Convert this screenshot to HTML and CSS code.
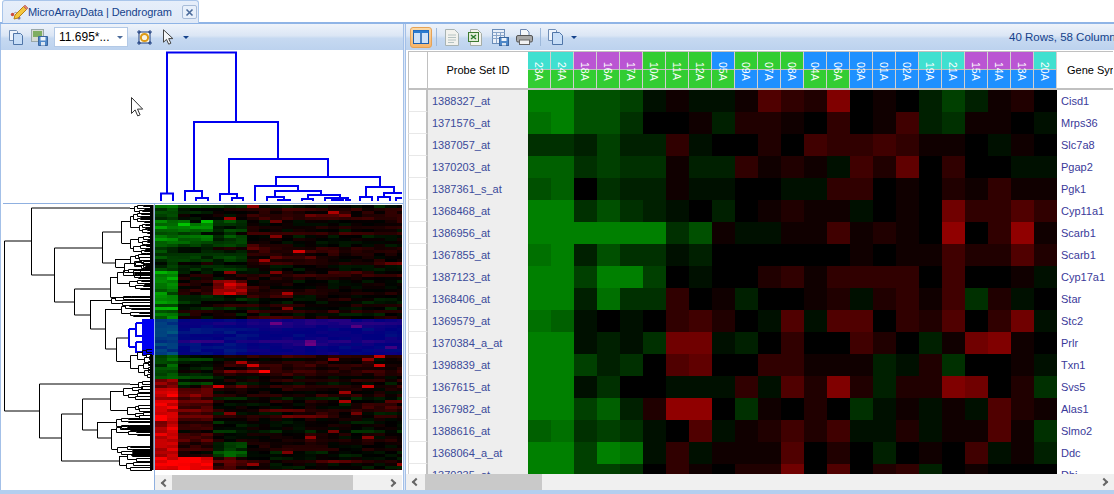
FILE: index.html
```html
<!DOCTYPE html>
<html lang="en">
<head>
<meta charset="utf-8">
<title>MicroArrayData | Dendrogram</title>
<link rel="stylesheet" href="styles.css">
</head>
<body>
<div class="app">
  <div class="tabstrip">
    <div class="tab">
      <svg class="tab-icon" width="18" height="16" viewBox="0 0 18 16"><path d="M2 10.500 6 8l3 5" fill="none" stroke="#a89c9c" stroke-width="1"/><circle cx="2.500" cy="10.500" r="1.700" fill="#cf4a3c"/><circle cx="9" cy="14" r="1.500" fill="#7d7398"/><path d="M5 11 13.500 2.500l3 3L8 14l-4 1z" fill="#f4c63e" stroke="#b87f12" stroke-width="1"/><path d="M13.500 2.500l1.500-1.500 3 3-1.500 1.500z" fill="#e0806f" stroke="#b0604f" stroke-width=".6"/></svg>
      <span class="tab-label">MicroArrayData | Dendrogram</span>
      <span class="tab-close"><svg width="9" height="9" viewBox="0 0 9 9"><path d="M1.500 1.500l6 6M7.500 1.500l-6 6" stroke="#4a6a9a" stroke-width="1.600"/></svg></span>
    </div>
  </div>
  <div class="workspace">
    <section class="panel panel-left">
      <div class="toolbar">
        <svg class="ico ico-copy" width="16" height="16" viewBox="0 0 16 16"><path d="M1.500 1.500h7l1 1v9h-8z" fill="#eef4fc" stroke="#6f8db5"/><path d="M5.500 4.500h7l2 2v9h-9z" fill="#c8def7" stroke="#4f75a8"/></svg>
        <svg class="ico ico-saveimg" width="17" height="17" viewBox="0 0 17 17"><rect x=".5" y=".5" width="12" height="12" fill="#d6dcd4" stroke="#9aa8a8"/><rect x="2" y="2" width="9" height="6" fill="#7fae62"/><path d="M7.500 7.500h9v9h-9z" fill="#4f88c8" stroke="#3a669f"/><rect x="9.500" y="8" width="5" height="3.500" fill="#eef4fb"/><rect x="10" y="13" width="4" height="3.500" fill="#dbe6f2"/></svg>
        <div class="combo"><span class="combo-text">11.695*...</span><span class="caret caret-combo"></span></div>
        <svg class="ico ico-fit" width="15" height="15" viewBox="0 0 15 15"><path d="M2 2h11v11H2z" fill="#f7f3e3" stroke="#1f3f80"/><circle cx="7.500" cy="7.500" r="3.600" fill="none" stroke="#dd9a16" stroke-width="2"/><path d="M0 2h4M2 0v4M11 2h4M13 0v4M0 13h4M2 11v4M11 13h4M13 11v4" stroke="#1f3f80"/></svg>
        <svg class="ico ico-arrow" width="11" height="16" viewBox="0 0 11 16"><path d="M.5.800v12.400l3-2.800 2.200 4.800 2.200-1-2.200-4.600h4.200z" fill="#f4f6f8" stroke="#444"/></svg>
        <span class="caret caret-tool"></span>
      </div>
      <div class="plot">
        <div class="plot-top">
          <svg class="dendro-top" width="248" height="153" viewBox="155 50 248 153"><path fill="none" stroke="#0000f0" stroke-width="2" d="M167 193V52.500H236V122M194 191V122H278V159M229 194V159H328V177M276 186V177H380V187M255 201V186H298V191M275 197V191H321V195M161 201V193.500H173V201M185 201V191H202V198M196 201V198H208V201M220 201V194H237V198M232 201V198H243V201M267 201V197H284V200M278 201V200H290V201M308 199V195H340V198M302 201V199H313V201M325 201V198H348V200M332 201V200H343V201M360 201V197H372V201M366 197V187H394V193M384 197V193H402M378 201V197H390V201M396 201V198H402M350 201V200H345"/></svg>
        </div>
        <div class="plot-bottom">
          <svg id="dendro-left" class="dendro-left" width="153" height="285" viewBox="1 205 153 285"><path fill="none" stroke="#000" d="M4.500 241V411M4.500 241H31.500M4.500 411H39.500M31.500 208V275M31.500 208H130M31.500 275H54.500M54.500 248V302H74.500M54.500 248H102.500M102.500 232V263M102.500 232H121.500M102.500 263H115.500M121.500 221V243M115.500 259V267M74.500 289V315M74.500 289H110.500M74.500 315H90.500M110.500 277V297M90.500 300V329M90.500 329H105.500M105.500 309V349M105.500 349H116.500M116.500 338V361M116.500 338H129M39.500 384V438M39.500 384H130M39.500 438H61.500M61.500 414V461M61.500 414H82.500M61.500 461H119.500M82.500 399V430M82.500 399H110.500M82.500 430H97.500M110.500 391V410M97.500 422V438M97.500 438H111.500M111.500 429V449M119.500 456V465"/><rect x="150" y="205" width="3.500" height="265"/><rect x="142" y="319" width="12" height="36" fill="#0000f0"/><path fill="none" stroke="#0000f0" stroke-width="2" d="M129 329V347M129 329H136M129 347H136M136 323V336H142M136 323H142M136 342V352H142M136 342H142"/></svg>
          <div class="heat-col">
            <div class="heat-wrap">
              <canvas id="heat" width="247" height="265"></canvas>
              <div class="heat-select"></div>
            </div>
            <div class="scrollbar scrollbar-left">
              <span class="chev chev-l"></span><span class="thumb thumb-left"></span><span class="chev chev-r"></span>
            </div>
          </div>
        </div>
        <svg class="mouse" width="13" height="20" viewBox="0 0 13 20"><path d="M.5.500v16l3.600-3.600 2.600 6 2.400-1-2.600-5.800h5.200z" fill="#fff" stroke="#333"/></svg>
      </div>
    </section>
    <section class="panel panel-right">
      <div class="toolbar">
        <span class="tool-on"><svg width="16" height="14" viewBox="0 0 16 14"><rect x=".5" y=".5" width="15" height="13" fill="#cfe2f8" stroke="#1d5fae"/><rect x=".5" y=".5" width="15" height="2.500" fill="#2a7bd0"/><path d="M8 3v10" stroke="#1d5fae" stroke-width="1.500"/></svg></span>
        <span class="sep sep-a"></span>
        <svg class="ico ico-doc" width="14" height="17" viewBox="0 0 14 17"><path d="M.5.500h9l4 4v12H.5z" fill="#f2f2ee" stroke="#a8b3b3"/><path d="M3 6h8M3 8.500h8M3 11h8M3 13.500h6" stroke="#b4c2c2"/></svg>
        <svg class="ico ico-xls" width="14" height="17" viewBox="0 0 14 17"><path d="M2.500.500h7l4 4v12h-11z" fill="#f4f4ee" stroke="#a5aca5"/><rect x=".5" y="3.500" width="10" height="9" fill="#e2ecd8" stroke="#3d7a30"/><path d="M3 6l5 4M8 6l-5 4" stroke="#2c7a2c" stroke-width="1.400"/></svg>
        <svg class="ico ico-tbl" width="17" height="17" viewBox="0 0 17 17"><rect x=".5" y=".5" width="12" height="14" fill="#e9eff8" stroke="#6b8db8"/><path d="M.5 3.500h12M.5 6.500h12M.5 9.500h12M4.500 3v11M8.500 3v11" stroke="#8aa5c9"/><rect x="7.500" y="8.500" width="9" height="8" fill="#4f88c8" stroke="#3a669f"/><rect x="9.500" y="9" width="5" height="3" fill="#eef4fb"/><rect x="10" y="14" width="4" height="2.500" fill="#dbe6f2"/></svg>
        <svg class="ico ico-print" width="17" height="16" viewBox="0 0 17 16"><path d="M4.500.500h6l2.500 2.500v4H4.500z" fill="#f5f7fb" stroke="#6d86ae"/><rect x=".5" y="6.500" width="16" height="6.500" rx="1.500" fill="#a8a8a8" stroke="#555"/><rect x="3.500" y="11" width="10" height="4.500" fill="#f2f2f2" stroke="#666"/></svg>
        <span class="sep sep-b"></span>
        <svg class="ico ico-copy2" width="16" height="16" viewBox="0 0 16 16"><path d="M.5.500h7l1 1v10h-8z" fill="#eef4fc" stroke="#6f8db5"/><path d="M4.500 3.500h7l3 3v9h-10z" fill="#c8def7" stroke="#4f75a8"/></svg>
        <span class="caret caret-tool2"></span>
        <span class="status">40 Rows, 58 Columns</span>
      </div>
      <div class="table-clip">
        <div id="table" class="table"></div>
      </div>
      <div class="scrollbar scrollbar-right">
        <span class="chev chev-l"></span><span class="thumb thumb-right"></span><span class="chev chev-r"></span>
      </div>
    </section>
  </div>
</div>
<script src="app.js"></script>
</body>
</html>
```

FILE: styles.css
```css
* { box-sizing: border-box; }
html, body { margin: 0; padding: 0; }
body { width: 1114px; height: 494px; overflow: hidden; background: #fff; font-family: "Liberation Sans", Arial, sans-serif; font-size: 11px; }
.app { width: 1114px; height: 494px; display: flex; flex-direction: column; }

.tabstrip { height: 22px; padding-left: 2px; background: #fff; flex: none; }
.tab { width: 197px; height: 23px; display: flex; align-items: center; padding-left: 7px; border: 1px solid #a9c5ea; border-bottom: 0; border-radius: 3px 3px 0 0; background: linear-gradient(#e6eefa, #dfe9f7); position: relative; z-index: 1; }
.tab-label { color: #15428b; font-size: 11px; letter-spacing: -.1px; white-space: nowrap; flex: 1; overflow: hidden; }
.tab-close { width: 15px; height: 14px; margin-right: 1px; display: flex; align-items: center; justify-content: center; border: 1px solid #a8bcd8; border-radius: 2px; background: #e8f0fb; }

.workspace { flex: 1; min-height: 0; display: flex; gap: 1px; background: #dfe8f6; border-top: 2px solid #8fb4e6; border-bottom: 4px solid #b4cfef; }
.panel { display: flex; flex-direction: column; min-width: 0; background: #fff; }
.panel-left { width: 404px; border-left: 1px solid #a3c0e8; border-right: 1px solid #a3c0e8; }
.panel-right { flex: 1; border-left: 1px solid #a3c0e8; }

.toolbar { height: 26px; flex: none; display: flex; align-items: center; overflow: hidden; background: linear-gradient(#eef3fa 0, #dbe6f5 45%, #c6d9f1 55%, #bcd2ee 100%); }
.ico { flex: none; display: block; }
.ico-copy { margin-left: 7px; }
.ico-saveimg { margin-left: 7px; }
.combo { width: 74px; height: 20px; margin-left: 6px; display: flex; align-items: center; padding-left: 4px; background: #fff; border: 1px solid #b3c9e6; flex: none; }
.combo-text { font-size: 12px; color: #000; flex: 1; }
.caret { width: 0; height: 0; display: block; border-left: 3px solid transparent; border-right: 3px solid transparent; border-top: 3px solid #15428b; flex: none; }
.caret-combo { margin-right: 4px; border-top-color: #4a6a9a; }
.ico-fit { margin-left: 9px; }
.ico-arrow { margin-left: 11px; }
.caret-tool { margin-left: 9px; }

.tool-on { width: 22px; height: 21px; margin-left: 4px; display: flex; align-items: center; justify-content: center; flex: none; border: 1px solid #e5a257; border-radius: 3px; background: linear-gradient(#fbd9a5, #f8b56a); }
.sep { width: 1px; height: 18px; background: #9db8da; flex: none; }
.sep-a { margin-left: 4px; }
.ico-doc { margin-left: 8px; }
.ico-xls { margin-left: 9px; }
.ico-tbl { margin-left: 10px; }
.ico-print { margin-left: 7px; }
.sep-b { margin-left: 7px; }
.ico-copy2 { margin-left: 7px; }
.caret-tool2 { margin-left: 7px; }
.status { margin-left: 432px; color: #15428b; font-size: 11.500px; white-space: nowrap; }

.plot { flex: 1; min-height: 0; display: flex; flex-direction: column; position: relative; }
.plot-top { height: 153px; padding-left: 154px; flex: none; }
.dendro-top, .dendro-left { display: block; }
.plot-bottom { flex: 1; min-height: 0; display: flex; border-top: 1px solid #8fb0e0; padding-top: 1px; margin-left: 2px; }
.dendro-left { margin-left: -2px; flex: none; }
.heat-col { width: 248px; margin-top: -1px; padding-top: 1px; border-left: 1px solid #8fb0e0; display: flex; flex-direction: column; flex: none; }
.heat-wrap { position: relative; height: 265px; }
#heat { display: block; }
.heat-select { position: absolute; left: 0; right: 0; top: 114px; height: 36px; background: rgba(0, 0, 255, .5); }
.mouse { position: absolute; left: 130px; top: 47px; }

.scrollbar { height: 16px; display: flex; align-items: center; background: #f0f0f0; flex: none; }
.scrollbar-left { margin-top: 5px; height: 15px; }
.thumb { display: block; height: 100%; background: #c9c9c9; }
.thumb-left { width: 181px; margin-left: 4px; }
.thumb-right { width: 117px; margin-left: 6px; }
.chev { width: 6px; height: 6px; display: block; border-left: 2px solid #666; border-bottom: 2px solid #666; flex: none; }
.chev-l { margin-left: 7px; transform: rotate(45deg); }
.chev-r { margin-left: auto; margin-right: 7px; transform: rotate(225deg); }

.table-clip { flex: 1; min-height: 0; overflow: hidden; padding: 1px 0 0 2px; }
.table { display: grid; grid-template-columns: 20px 100px repeat(23, 23px) 56px; grid-auto-rows: 22px; grid-template-rows: 39px; }
.th { background: #fff; border-top: 1px solid #c0c0c0; border-bottom: 2px solid #c0c0c0; color: #000; display: flex; align-items: center; justify-content: center; white-space: nowrap; overflow: hidden; }
.th-num { border-left: 1px solid #c0c0c0; border-right: 1px solid #c0c0c0; }
.th-gene { justify-content: flex-start; padding-left: 10px; }
.sample { position: relative; display: flex; flex-direction: column; border-right: 1px solid #d0d0d0; border-top: 1px solid #c0c0c0; border-bottom: 2px solid #c0c0c0; }
.sample-top { height: 18px; border-bottom: 1px solid #c0c0c0; flex: none; }
.sample-bot { flex: 1; }
.sample-label { position: absolute; left: 0; right: 0; top: 8px; color: #fff; font-size: 10.500px; line-height: 22px; height: 22px; writing-mode: vertical-rl; text-align: center; display: flex; justify-content: center; }
.num { background: #fff; border-left: 1px solid #d0d0d0; border-right: 2px solid #c0c0c0; border-bottom: 1px solid #e8e8e8; }
.probe { background: #eeeeee; color: #3a4a9a; display: flex; align-items: center; padding-left: 4px; white-space: nowrap; }
.gene { background: #fff; color: #3a3a9a; display: flex; align-items: center; padding-left: 4px; white-space: nowrap; overflow: hidden; }
```

FILE: app.js
```js
(function () {
  var seed = 11;
  function rnd() { seed = (seed * 16807) % 2147483647; return (seed - 1) / 2147483646; }

  /* Right-hand table */
  var T = '#40e0d0', O = '#ba55d3', G = '#32cd32', B = '#1e90ff';
  var samples = [
    ['23A', T, G], ['24A', T, G], ['18A', O, G], ['16A', O, G], ['17A', O, G], ['10A', G, G],
    ['11A', G, G], ['12A', G, G], ['05A', B, G], ['09A', G, B], ['07A', G, B], ['08A', G, B],
    ['04A', B, G], ['06A', B, G], ['03A', B, B], ['01A', B, B], ['02A', B, B], ['19A', T, B],
    ['21A', T, B], ['15A', O, B], ['14A', O, B], ['13A', O, B], ['20A', T, B]
  ];
  var rows = [
    ['1388327_at', 'Cisd1', 'hheeda1aa15328010bdb120'],
    ['1371576_at', 'Mrps36', 'gheec001b22103014bc110a'],
    ['1387057_at', 'Slc7a8', 'ccbdbb3a002043343110a10'],
    ['1370203_at', 'Pgap2', 'ffcdcc1bb3121a4260300aa'],
    ['1387361_s_at', 'Pgk1', 'ef0cbb1aa00aa3301021311'],
    ['1368468_at', 'Cyp11a1', 'hhcecba0b01211a01073353'],
    ['1386956_at', 'Scarb1', 'hhhhhhce1aa114121090391'],
    ['1367855_at', 'Scarb1', 'ghbeccab000000101142252'],
    ['1387123_at', 'Cyp17a1', 'hhdhhd0a00231333304001a'],
    ['1368406_at', 'Star', 'hhbgcc301b0012a2314c2a0'],
    ['1369579_at', 'Stc2', 'gfa0a03420a5a550325037a'],
    ['1370384_a_at', 'Prlr', 'hhabac77ab0300420b17810'],
    ['1398839_at', 'Txn1', 'hhdbc0560033111ba2c001a'],
    ['1367615_at', 'Svs5', 'hhac00aaa3a5282b228702c'],
    ['1367982_at', 'Alas1', 'hhdfb2990c1020ca1a1a521'],
    ['1388616_at', 'Slmo2', 'fgcdca05a12424aa2a1151c'],
    ['1368064_a_at', 'Ddc', 'hhdhga3a1115020b0104a1b'],
    ['1370235_at', 'Dbi', 'hhddc031022705023b01000']
  ];
  function color(ch) {
    var c = ch.charCodeAt(0), v;
    if (c >= 97) { v = (c - 96) * 16; return 'rgb(0,' + v + ',0)'; }
    v = (c - 48) * 16;
    return 'rgb(' + v + ',0,0)';
  }
  function el(cls, text) {
    var d = document.createElement('div');
    d.className = cls;
    if (text) d.textContent = text;
    return d;
  }
  var table = document.getElementById('table');
  table.appendChild(el('th th-num'));
  table.appendChild(el('th', 'Probe Set ID'));
  samples.forEach(function (s) {
    var h = el('sample');
    var a = el('sample-top'); a.style.background = s[1];
    var b = el('sample-bot'); b.style.background = s[2];
    h.appendChild(a); h.appendChild(b);
    h.appendChild(el('sample-label', s[0]));
    table.appendChild(h);
  });
  table.appendChild(el('th th-gene', 'Gene Symbol'));
  rows.forEach(function (r) {
    table.appendChild(el('num'));
    table.appendChild(el('probe', r[0]));
    for (var i = 0; i < 23; i++) {
      var c = el('cell');
      c.style.background = color(r[2].charAt(i) || '0');
      table.appendChild(c);
    }
    table.appendChild(el('gene', r[1]));
  });

  /* Left-hand heat map: top, bottom, mean of columns 0-1, 2-4, 5-7, rest */
  var bands = [
    [0, 13, -.32, -.12, -.06, .07], [13, 23, -.5, -.5, -.12, .08], [23, 39, -.38, -.3, -.14, .08],
    [39, 57, -.24, -.14, -.12, .1], [57, 65, -.14, -.02, -.06, .1], [65, 73, -.55, .04, 0, .1],
    [73, 89, -.42, .16, .55, .08], [89, 113, -.45, -.03, -.03, .06], [113, 150, -.42, 0, -.01, .12],
    [150, 174, -.32, -.12, .05, .1], [174, 181, .55, -.1, 0, .08], [181, 215, .85, .3, 0, .03],
    [215, 235, .75, .2, -.06, .02], [235, 250, .72, .1, -.24, 0], [250, 265, .75, .85, .18, 0]
  ];
  function mean(y, c) {
    for (var i = 0; i < bands.length; i++) {
      if (y >= bands[i][0] && y < bands[i][1]) {
        var b = bands[i];
        if (c < 2) return b[2];
        if (c < 5) return b[3];
        if (c < 8) return b[4] * (c === 6 ? 1.4 : 1);
        return b[5] - (c > 15 ? .02 : 0);
      }
    }
    return 0;
  }
  var ctx = document.getElementById('heat').getContext('2d');
  ctx.fillStyle = '#000';
  ctx.fillRect(0, 0, 247, 265);
  for (var y = 0; y < 265; y += 3) {
    var rowN = (rnd() - .5) * .26;
    var stripe = rnd() < .35 ? Math.floor(rnd() * 20) + 2 : -9;
    for (var c = 0; c < 22; c++) {
      var m = mean(y, c);
      var v = m * (.75 + rnd() * .55) + rowN * (c < 2 ? .6 : 1) + (rnd() - .5) * .2;
      if (c >= stripe && c < stripe + 4) v += .22;
      if (c >= 2 && rnd() < .02) v += .55;
      v = Math.max(-1, Math.min(1, v));
      var n = Math.round(Math.abs(v) * 255);
      ctx.fillStyle = v > 0 ? 'rgb(' + n + ',0,0)' : 'rgb(0,' + n + ',0)';
      var x0 = Math.round(c * 11.52);
      ctx.fillRect(x0, y, Math.round((c + 1) * 11.52) - x0, 3);
    }
  }

  /* Fine leaves of the left dendrogram */
  var d = '';
  function sub(x, y, h) {
    if (h < 1.6 || x > 146) { d += 'M' + x + ' ' + y + 'H152'; return; }
    var nx = Math.round(x + 2 + rnd() * (152 - x) * .35) + .5;
    var a = Math.round(y - h * .45) + .5, b = Math.round(y + h * .45) + .5;
    d += 'M' + x + ' ' + y + 'H' + nx + 'M' + nx + ' ' + a + 'V' + b;
    sub(nx, a, h * .55);
    sub(nx, b, h * .55);
  }
  [[130, 208.5, 6], [121.5, 221.5, 12], [121.5, 243.5, 10], [115.5, 259.5, 8], [115.5, 267.5, 10],
   [110.5, 277.5, 12], [110.5, 297.5, 3], [90.5, 300.5, 5], [105.5, 309.5, 7], [116.5, 361.5, 15],
   [130, 384.5, 5], [110.5, 391.5, 8], [110.5, 410.5, 8], [97.5, 422.5, 7], [111.5, 429.5, 6],
   [111.5, 449.5, 6], [119.5, 456.5, 5], [119.5, 465.5, 5]].forEach(function (t) { sub(t[0], t[1], t[2]); });
  var p = document.createElementNS('http://www.w3.org/2000/svg', 'path');
  p.setAttribute('d', d);
  p.setAttribute('fill', 'none');
  p.setAttribute('stroke', '#000');
  document.getElementById('dendro-left').appendChild(p);
})();
```
